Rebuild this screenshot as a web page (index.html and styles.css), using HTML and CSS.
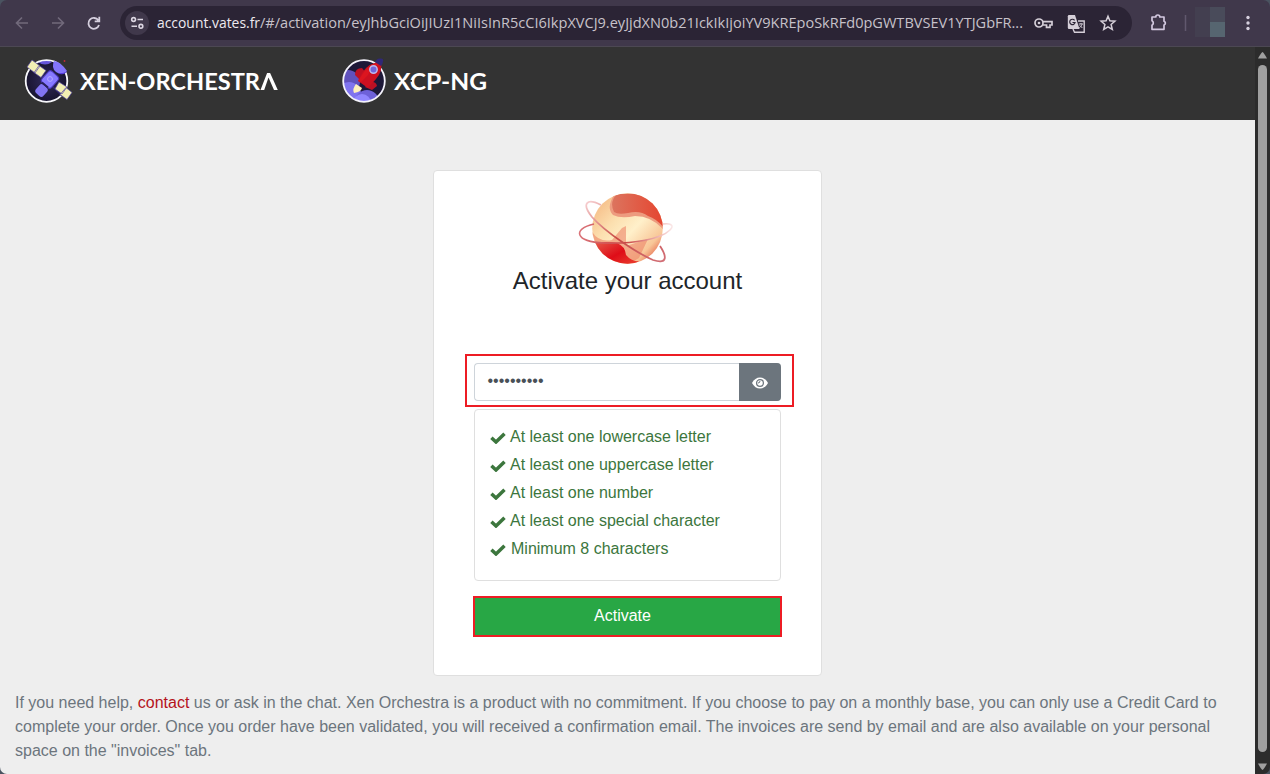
FILE: index.html
```
<!DOCTYPE html>
<html lang="en">
<head>
<meta charset="utf-8">
<title>Activate your account</title>
<link rel="stylesheet" href="styles.css">
</head>
<body>
<div class="window">
  <div class="toolbar">
    <svg class="nav" viewBox="0 0 120 46" fill="none" stroke-width="1.6">
      <path d="M28 23H17M22 17.500l-5.500 5.500 5.500 5.500" stroke="#716a7b"/>
      <path d="M52 23H63M58 17.500l5.500 5.500-5.500 5.500" stroke="#716a7b"/>
      <path d="M98.300 20.300A5.400 5.400 0 1 0 99 25M99.300 16.800v4.500h-4.600" stroke="#d5cfde" stroke-width="1.8"/>
    </svg>
    <div class="address">
      <svg class="site" viewBox="0 0 24 24" fill="none" stroke="#dcd6e2" stroke-width="1.6">
        <circle cx="8.600" cy="8.500" r="1.900"/><path d="M12.500 8.500h5.500M6.500 15.300H12"/><circle cx="15.900" cy="15.300" r="1.900"/>
      </svg>
      <svg class="url" viewBox="0 0 881 34"><text class="host" x="8" y="22" textLength="103" lengthAdjust="spacingAndGlyphs">account.vates.fr</text><text x="111" y="22" textLength="763" lengthAdjust="spacingAndGlyphs">/#/activation/eyJhbGciOiJIUzI1NiIsInR5cCI6IkpXVCJ9.eyJjdXN0b21IckIkIjoiYV9KREpoSkRFd0pGWTBVSEV1YTJGbFR...</text></svg>
      <svg class="tools" viewBox="0 0 92 34">
        <g fill="none" stroke="#d5cfd8" stroke-width="1.700">
          <circle cx="9" cy="17" r="4"/><path d="M12.800 15.600H22v3.400h-2v2.300h-3.500V19h-3.700"/>
          <path d="M48 15h6.200v11.300H44.500L43 23" stroke-width="1.400"/>
          <path d="M78 10.200l1.900 4.600 5 .4-3.800 3.300 1.200 4.900-4.300-2.600-4.300 2.600 1.200-4.900-3.800-3.300 5-.4z" stroke-width="1.500"/>
        </g>
        <circle cx="9" cy="17" r="1.300" fill="#d5cfd8"/>
        <path d="M39 9h6l4.500 14H39a1.200 1.200 0 0 1-1.200-1.200V10.200A1.200 1.200 0 0 1 39 9z" fill="#d5cfd8"/>
        <path d="M44.600 14.300a2.700 2.700 0 1 0 .5 2.200h-2.600" fill="none" stroke="#2b2435" stroke-width="1.200"/>
        <path d="M48.800 18h4.200M51 17v1M52 18.300c-.5 1.700-1.500 2.800-2.700 3.600M49.700 19.300l2.700 2.700" fill="none" stroke="#d5cfd8"/>
      </svg>
    </div>
    <svg class="actions" viewBox="0 0 138 46">
      <path d="M20 17h3.800a2 2 0 0 1 4 0H32v4.200a2 2 0 0 1 0 3.800v4.300H20v-4.100a2.500 2.500 0 0 0 0-4.400z" fill="none" stroke="#d2c8df" stroke-width="1.700" stroke-linejoin="round"/>
      <path d="M53.500 15v16" stroke="#61586e" stroke-width="1.500"/>
      <path d="M63 7h15v30H63z" fill="#433f50"/><path d="M78 7h15v15H78z" fill="#494b5a"/><path d="M78 22h15v15H78z" fill="#566570"/>
      <g fill="#d5cfdd"><circle cx="116" cy="17.500" r="1.700"/><circle cx="116" cy="23" r="1.700"/><circle cx="116" cy="28.500" r="1.700"/></g>
    </svg>
  </div>
  <div class="viewport">
    <div class="page">
      <header class="header">
        <svg class="brand" viewBox="0 0 270 60">
          <defs><radialGradient id="space"><stop offset="0" stop-color="#302a5b"/><stop offset="1" stop-color="#18142f"/></radialGradient></defs>
          <circle cx="26.500" cy="28" r="21" fill="url(#space)"/>
          <path d="M18 9Q25 5 32 9q-7 5-14 0z" fill="#6655d9"/>
          <circle cx="26.500" cy="28" r="20.800" fill="none" stroke="#f7f7fb" stroke-width="1.800"/>
          <path d="M34 8q6 0 13 10-6 5-11 1-5-4-2-11z" fill="#8375fc"/>
          <path d="M38 20q5 1 9-2-2 4-7 3z" fill="#563be0"/>
          <path d="M11 12l31 31" stroke="#30286b" stroke-width="1.500"/>
          <rect x="23.500" y="19" width="13" height="15" rx="3" transform="rotate(42 30 26.500)" fill="#8779ff" stroke="#4935b5"/>
          <rect x="16.500" y="32" width="10" height="11" rx="3" transform="rotate(42 21.500 37.500)" fill="#8173f2"/>
          <path d="M22 29.500l6 5" stroke="#28205c" stroke-width="2"/>
          <circle cx="30" cy="26" r="2.400" fill="none" stroke="#b4aafe"/>
          <g fill="#f2efb4" stroke="#5546a3" stroke-width=".7">
            <path d="M12 7l8 6-5 7-8-6zM19 12.500l7 5-5 7-7-5zM39 29l8 5-5 7-7-5zM46 34.500l6 5-5 7-7-5z"/>
          </g>
          <circle cx="44.500" cy="8" r=".9" fill="#c42a38"/>
          <text class="wordmark" x="60" y="37" textLength="180" lengthAdjust="spacingAndGlyphs">XEN-ORCHESTR</text>
          <path d="M240.500 37l6.600-17h3l7.700 17h-3.800l-5.500-12.500-4.300 12.500z" fill="#fff"/>
          <path d="M59 27.800h7.500M78 27.800h-7.500" fill="none" stroke="#333" stroke-width="1.800"/>
        </svg>
        <svg class="brand brand-xcp" viewBox="0 0 160 60">
          <defs><clipPath id="disc"><circle cx="24" cy="28" r="20.500"/></clipPath></defs>
          <circle cx="24" cy="28" r="20.800" fill="#1d1838"/>
          <g clip-path="url(#disc)">
            <circle cx="8" cy="29" r="12" fill="#6051bd"/><circle cx="9" cy="41" r="12" fill="#8074ef"/><circle cx="27" cy="49" r="12" fill="#6e61d9"/><circle cx="22" cy="50" r="9" fill="#9186ff"/>
          </g>
          <circle cx="24" cy="28" r="20.800" fill="none" stroke="#f4f3fb" stroke-width="1.800"/>
          <path d="M22 15q-7 0-7 7l4 4 7-6zM29 29q7-1 8 4l-5 4-7-3z" fill="#bd1024"/>
          <path d="M18 28l4-8Q29 9 41 9q2 9-5 17l-8 9z" fill="#cc1020"/>
          <path d="M24 19Q31 10 40 10q-9 5-12 12l-7 7-3-1z" fill="#e61920" opacity=".6"/>
          <path d="M35 9q2-4 5-3.500 4-.5 3 3-.5 3-2 4.500z" fill="#302876"/>
          <circle cx="33.500" cy="16.500" r="3.700" fill="#7165db" stroke="#bcb7ee" stroke-width="1.500"/>
          <path d="M16 31l6 4q-1 4-8 5-2-4 2-9z" fill="#fff1bd"/>
          <text class="wordmark" x="54" y="37" textLength="93" lengthAdjust="spacingAndGlyphs">XCP-NG</text>
          <path d="M53 27.800h7.500M72 27.800h-7.500" fill="none" stroke="#333" stroke-width="1.800"/>
        </svg>
      </header>
      <main class="card">
        <svg class="planet" viewBox="0 0 130 80">
          <defs>
            <linearGradient id="sun" x1=".1" y1=".15" x2=".9" y2=".9"><stop offset="0" stop-color="#f6c08b"/><stop offset=".3" stop-color="#fce0b0"/><stop offset=".55" stop-color="#fff0ca"/><stop offset=".85" stop-color="#f8c697"/><stop offset="1" stop-color="#e66a50"/></linearGradient>
            <linearGradient id="cap"><stop offset="0" stop-color="#dc745e"/><stop offset="1" stop-color="#e5442f"/></linearGradient>
            <linearGradient id="flare" x2="1" y2="1"><stop offset="0" stop-color="#e45c4b"/><stop offset=".5" stop-color="#df0d18"/><stop offset="1" stop-color="#ed4c35"/></linearGradient>
            <linearGradient id="ring"><stop offset="0" stop-color="#da7379"/><stop offset=".5" stop-color="#c94746"/><stop offset=".9" stop-color="#f3c4c2"/><stop offset="1" stop-color="#fae8e8"/></linearGradient>
            <linearGradient id="ring2" x2="1" y2="1"><stop offset="0" stop-color="#f7d0d2"/><stop offset=".5" stop-color="#c84a44"/><stop offset="1" stop-color="#d27078"/></linearGradient>
            <clipPath id="globe"><circle cx="67.500" cy="42.500" r="35.300"/></clipPath>
          </defs>
          <circle cx="67.500" cy="42.500" r="35.300" fill="url(#sun)"/>
          <g clip-path="url(#globe)">
            <path d="M54 9Q46 22 53 29q8 4 22 1 16 0 28 13V8z" fill="#ed9b7f"/>
            <path d="M57 8q-8 8-3 18 4 3 14 1 12-3 20 3 9 3 16 12V6z" fill="url(#cap)"/>
            <path d="M30 42q7 15 22 12l10-12 4-2v20l22-7-9 19-18 11-31-20z" fill="#ed8467" opacity=".6"/>
            <path d="M33 57q13-2 24 0 8 3 9 12 6 7 13 6l-8 7-22-1z" fill="url(#flare)"/>
          </g>
          <path d="M34 38C12 43 15 56 44 57 74 58 101 53 110 44c5-5 0-7-7-6" fill="none" stroke="url(#ring)" stroke-width="1.600"/>
          <path d="M41 19C27 12 21 17 32 31 46 47 79 68 93 74c16 5 13-5 7-14" fill="none" stroke="url(#ring2)" stroke-width="1.800"/>
        </svg>
        <h1 class="title">Activate your account</h1>
        <form class="form">
          <div class="highlight">
            <div class="field"><span class="password">••••••••••</span>
              <span class="reveal"><svg viewBox="0 0 16 12"><path fill="#fff" d="M0 6Q3 .5 8 .5T16 6q-3 5.500-8 5.500T0 6z"/><circle cx="8" cy="6" r="3.400" fill="none" stroke="#6c757d" stroke-width="1.300"/><path d="M6 6q2 0 2-2" fill="none" stroke="#6c757d"/></svg></span>
            </div>
          </div>
          <ul class="rules">
            <li><svg class="check" viewBox="0 0 16 12"><path d="M1.400 5.800l4.600 4.200L14.500 1.800"/></svg>At least one lowercase letter</li>
            <li><svg class="check" viewBox="0 0 16 12"><path d="M1.400 5.800l4.600 4.200L14.500 1.800"/></svg>At least one uppercase letter</li>
            <li><svg class="check" viewBox="0 0 16 12"><path d="M1.400 5.800l4.600 4.200L14.500 1.800"/></svg>At least one number</li>
            <li><svg class="check" viewBox="0 0 16 12"><path d="M1.400 5.800l4.600 4.200L14.500 1.800"/></svg>At least one special character</li>
            <li class="length"><svg class="check" viewBox="0 0 16 12"><path d="M1.400 5.800l4.600 4.200L14.500 1.800"/></svg>Minimum 8 characters</li>
          </ul>
          <button class="submit" type="button">Activate</button>
        </form>
      </main>
      <p class="help">If you need help, <a class="contact">contact</a> us or ask in the chat. Xen Orchestra is a product with no commitment. If you choose to pay on a monthly base, you can only use a Credit Card to complete your order. Once you order have been validated, you will received a confirmation email. The invoices are send by email and are also available on your personal space on the "invoices" tab.</p>
    </div>
    <div class="scrollbar">
      <svg class="arrow" viewBox="0 0 9 7"><path d="M4.500 0Q5.500 0 9 6.500H0Q3.500 0 4.500 0z"/></svg>
      <div class="thumb"></div>
      <svg class="arrow" viewBox="0 0 9 7"><path d="M4.500 7Q5.500 7 9 .5H0Q3.500 7 4.500 7z"/></svg>
    </div>
  </div>
</div>
</body>
</html>
```
FILE: styles.css
```
* { box-sizing: border-box; }
body { margin: 0; background: #4a5360; font-family: "Liberation Sans", Arial, sans-serif; }
svg { display: block; flex: none; }
.window { width: 1270px; height: 774px; display: flex; flex-direction: column; overflow: hidden; border-radius: 7px; }
.toolbar { height: 47px; display: flex; background: #40384b; border-bottom: 1px solid #4c4853; flex: none; }
.nav { width: 120px; height: 46px; }
.address { width: 1012px; height: 34px; margin-top: 6px; border-radius: 17px; background: #2b2435; display: flex; align-items: center; }
.site { width: 24px; height: 24px; margin-left: 5px; border-radius: 50%; background: #40384b; }
.url { width: 881px; height: 34px; overflow: visible; font: 15px "Open Sans", "Noto Sans", sans-serif; fill: #c7c2ca; }
.host { fill: #eeeaf0; }
.tools { width: 92px; height: 34px; }
.actions { width: 138px; height: 46px; }
.viewport { height: 727px; display: flex; }
.page { width: 1255px; background: #eee; overflow: hidden; }
.header { height: 73px; padding: 6px 20px; display: flex; background: #333; }
.brand { width: 270px; height: 60px; }
.brand-xcp { width: 160px; margin-left: 50px; }
.wordmark { font: 700 23.500px Lato, sans-serif; fill: #fff; }
.card { width: 389px; height: 506px; margin: 50px 0 0 433px; border: 1px solid #dfdfdf; border-radius: 4px; background: #fff; }
.planet { width: 130px; height: 80px; margin: 15px 0 0 126px; }
.title { margin: 0; font-size: 24px; line-height: 29px; font-weight: 400; text-align: center; color: #212529; }
.form { width: 329px; margin: 59px 0 0 31px; }
.highlight { height: 53px; padding: 7px 11px 6px 7px; border: 2px solid #ed1c24; }
.field { width: 307px; height: 38px; display: flex; border: 1px solid #ced4da; border-right: 0; border-radius: 4px; }
.password { flex: 1; padding-left: 12.500px; font-size: 16px; line-height: 34px; color: #495057; }
.reveal { width: 42px; margin: -1px 0; padding-top: 2px; display: flex; align-items: center; justify-content: center; border-radius: 0 4px 4px 0; background: #6c757d; }
.reveal svg { width: 16px; height: 12px; }
.rules { list-style: none; width: 307px; height: 172px; margin: 2px 0 0 9px; padding: 13px 15px; border: 1px solid #dfdfdf; border-radius: 4px; color: #3c763d; font-size: 16px; line-height: 28px; }
.rules li { display: flex; align-items: center; gap: 4px; }
.rules .length { gap: 5px; }
.check { width: 16px; height: 12px; margin-top: 1px; fill: none; stroke: #3c763d; stroke-width: 3.500; }
.submit { display: block; width: 309px; height: 41px; margin: 15px 0 0 8px; padding: 0 10px 2px 0; border: 2px solid #ed1c24; background: #28a745; color: #fff; font: 16px "Liberation Sans", Arial, sans-serif; }
.help { margin: 15px 0 0 15px; width: 1225px; font-size: 16px; line-height: 24px; color: #6c757d; }
.contact { color: #b5121b; }
.scrollbar { width: 15px; padding: 5px 0 4px; background: #2c2c2c; display: flex; flex-direction: column; align-items: center; }
.arrow { width: 9px; height: 7px; fill: #a0a0a0; }
.thumb { width: 9px; flex: 1; margin: 6px 0 11px; border-radius: 5px; background: #a0a0a0; }
```
